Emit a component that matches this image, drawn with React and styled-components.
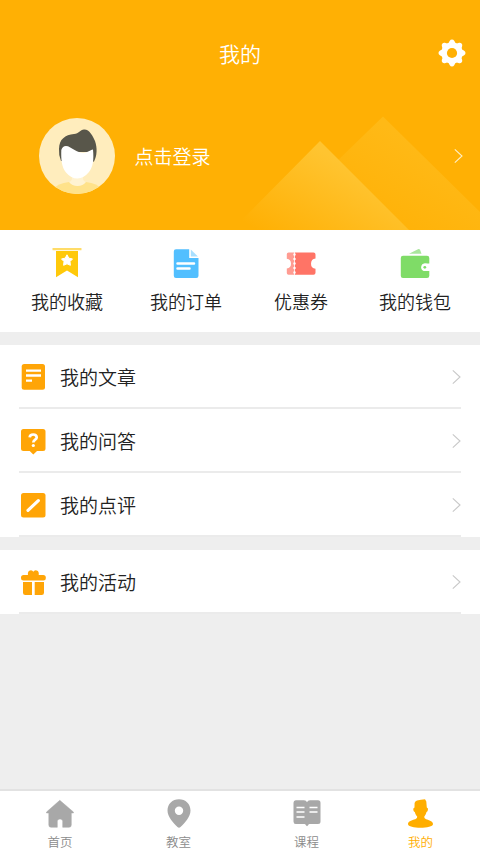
import React from 'react'
import styled, { createGlobalStyle } from 'styled-components'

const GlobalStyle = createGlobalStyle`
    * {
        box-sizing: border-box;
    }
    body {
        margin: 0;
        background-color: #fff;
        font-family: 'Noto Sans CJK SC', sans-serif;
        font-weight: 350;
    }
    svg {
        display: block;
        flex: none;
    }
`

const Page = styled.div`
    display: flex;
    flex-direction: column;
    width: 480px;
    height: 853px;
    background-color: #eee;
    overflow: hidden;
`

const Header = styled.header`
    position: relative;
    flex: none;
    height: 230px;
    background-color: #ffb004;
    color: #fff;
`

const Mountains = styled.svg`
    position: absolute;
    right: 0;
    bottom: 0;
`

const TitleBar = styled.div`
    display: grid;
    grid-template-columns: 1fr auto 1fr;
    align-items: center;
    height: 106px;
    padding: 0 14px;
`

const Title = styled.h1`
    grid-column: 2;
    margin: 0;
    padding-bottom: 1px;
    font-size: 21px;
    line-height: 30px;
    font-weight: 350;
`

const SettingsButton = styled.button`
    justify-self: end;
    padding: 0;
    border: none;
    background: none;
`

const Login = styled.div`
    position: relative;
    display: flex;
    align-items: center;
    height: 99px;
    padding: 0 17.5px 0 39px;
`

const LoginText = styled.span`
    flex: 1;
    margin-left: 19.5px;
    font-size: 19px;
    line-height: 28px;
`

const QuickLinks = styled.nav`
    flex: none;
    display: grid;
    grid-template-columns: 118px 120px 110px 118px;
    height: 102px;
    padding: 17px 6px 0 8px;
    background-color: #fff;
`

const QuickLink = styled.div`
    display: flex;
    flex-direction: column;
    align-items: center;
    gap: 8px;
    color: #222;
    font-size: 18px;
    line-height: 28px;
    white-space: nowrap;
`

const Section = styled.section`
    flex: none;
    margin-top: ${(props) => props.gap};
    background-color: #fff;
`

const Row = styled.div`
    display: flex;
    align-items: center;
    height: 64px;
    margin: 0 19px;
    padding-top: 2px;
    border-bottom: 2px solid #ebebeb;
`

const RowIcon = styled.span`
    width: 28px;
    margin-right: 13px;
`

const RowText = styled.span`
    flex: 1;
    color: #222;
    font-size: 19px;
    line-height: 28px;
`

const TabBar = styled.nav`
    flex: none;
    display: grid;
    grid-template-columns: 120px 117px 139px 89px;
    height: 64px;
    margin-top: auto;
    padding-top: 8px;
    border-top: 2px solid #e2e2e2;
    background-color: #fff;
`

const Tab = styled.div`
    display: flex;
    flex-direction: column;
    align-items: center;
    gap: 4px;
    color: ${(props) => (props.$active ? '#ffae00' : '#8c8c8c')};
    font-size: 12.5px;
    line-height: 18px;
`

const Arrow = ({ color = '#c8c8c8' }) => (
    <svg width='10' height='16' viewBox='0 0 10 16' fill='none'>
        <path d='M1.800 1.300 9 8 1.800 14.700' stroke={color} strokeWidth='1.1' />
    </svg>
)

const Gear = () => (
    <svg width='28' height='28' viewBox='-14 -14 28 28'>
        <g fill='#fff'>
            <circle r='10.4' />
            {[0, 45, 90, 135, 180, 225, 270, 315].map((angle) => (
                <path
                    key={angle}
                    transform={`rotate(${angle})`}
                    d='M-5.2-8.8Q-3.2-9.7-2.2-12.2Q-1.5-13.5 0-13.5T2.2-12.2Q3.2-9.7 5.2-8.8Z'
                />
            ))}
        </g>
        <circle r='5.1' fill='#ffb004' />
    </svg>
)

const Avatar = () => (
    <svg width='76' height='76' viewBox='0 0 76 76'>
        <clipPath id='avatar'>
            <circle cx='38' cy='38' r='38' />
        </clipPath>
        <g clipPath='url(#avatar)'>
            <rect width='76' height='76' fill='#ffedbd' />
            <path
                d='M13 72Q19 65 30 64H47Q58 65 64 72V76H13Z'
                fill='#ffe28a'
            />
            <path
                d='M33 57H44V60Q44 63 47 64Q44 68 38.500 68T30 64Q33 63 33 60Z'
                fill='#fff3d2'
            />
            <path
                d='M22 43Q19.500 37 20 31C20.300 21 26 17 35 16C40 15.500 41 12 45 11.500C50 11 54 18 56 23C58.500 30 58 38 55 43.500L52 44V34H23V43Z'
                fill='#58564a'
            />
            <path
                d='M22.300 32Q24 26.800 29 28.300C34 30.500 38 34.800 44.500 34.700C49 34.700 51 32 54 31.500C55 42 54 49 50 54Q44.500 60.500 38.500 60.500Q32 60.500 27 54.500C22.500 49 22 41 22.300 32Z'
                fill='#fff'
            />
        </g>
    </svg>
)

const FavoriteIcon = () => (
    <svg width='30' height='32' viewBox='0 0 30 32'>
        <rect x='.5' y='1' width='29' height='2.300' rx='.6' fill='#ffdc68' />
        <path d='M4 4H26V30.300L15 23.500 4 30.300Z' fill='#ffc90a' />
        <path
            d='M15 7.800 16.800 11.200 20.500 11.900 18 14.600 18.400 18.300 15 16.800 11.600 18.300 12 14.600 9.500 11.900 13.200 11.200Z'
            fill='#fff'
            stroke='#fff'
            strokeLinejoin='round'
        />
    </svg>
)

const OrderIcon = () => (
    <svg width='30' height='32' viewBox='0 0 30 32'>
        <path
            d='M5 2.200H18.200V11H27.500V28.800Q27.500 31 25.300 31H5Q2.800 31 2.800 28.800V4.400Q2.800 2.200 5 2.200Z'
            fill='#52bfff'
        />
        <path d='M19.800 2.500 27 9.600H19.800Z' fill='#a8dfff' />
        <path d='M6.500 16.500H23M6.500 21.600H18.500' stroke='#fff' strokeWidth='2.500' strokeLinecap='round' />
    </svg>
)

const CouponIcon = () => (
    <svg width='30' height='32' viewBox='0 0 30 32'>
        <path
            d='M2.600 5.500H8V27.800H2.600Q.8 27.800.8 26V21.500A4.900 4.900 0 0 0 .8 11.800V7.300Q.8 5.500 2.600 5.500Z'
            fill='#ff9c92'
        />
        <path
            d='M8.800 5.500H27.500Q29.500 5.500 29.500 7.500V11.500A5.200 5.200 0 0 0 29.500 21.800V25.800Q29.500 27.800 27.500 27.800H8.800Z'
            fill='#ff7466'
        />
        <path d='M8.500 7.500V28' stroke='#fff' strokeWidth='2.500' strokeLinecap='round' strokeDasharray='0 4.500' />
    </svg>
)

const WalletIcon = () => (
    <svg width='30' height='32' viewBox='0 0 30 32'>
        <path d='M9 6.800 18.500 2Q19.500 1.800 20 2.800L21.500 6.800Z' fill='#a9e69c' />
        <path
            d='M3 8.800H27Q29.300 8.800 29.300 11V16.500H25.500A3.700 3.700 0 0 0 25.500 24H29.300V28.700Q29.300 31 27 31H3Q.8 31 .8 28.700V11Q.8 8.800 3 8.800Z'
            fill='#7fdc67'
        />
        <circle cx='25' cy='20.300' r='3.800' fill='#fff' />
        <circle cx='24.800' cy='20.300' r='1.400' fill='#7fdc67' />
    </svg>
)

const ArticleIcon = () => (
    <svg width='28' height='28' viewBox='0 0 28 28'>
        <rect x='2.700' y='1' width='23.300' height='25.800' rx='2.500' fill='#ffa507' />
        <path d='M7 7.600H22M7 12.500H22M7 17.600H13' stroke='#fff' strokeWidth='2.400' />
    </svg>
)

const QuestionIcon = () => (
    <svg width='28' height='28' viewBox='0 0 28 28'>
        <path
            d='M4.500 2H24Q26.500 2 26.500 4.500V21.500Q26.500 24 24 24H18L14.300 27.500 10.700 24H4.500Q2 24 2 21.500V4.500Q2 2 4.500 2Z'
            fill='#ffa507'
        />
        <path
            d='M10.700 10.400Q10.900 7.500 14.200 7.500T17.700 10.400C17.700 12.600 14.300 12.600 14.300 15.500'
            fill='none'
            stroke='#fff'
            strokeWidth='2.700'
        />
        <circle cx='14.300' cy='18.500' r='1.600' fill='#fff' />
    </svg>
)

const ReviewIcon = () => (
    <svg width='28' height='28' viewBox='0 0 28 28'>
        <rect x='2' y='2' width='24.500' height='24.500' rx='2.500' fill='#ffa507' />
        <path d='M9 19.300 19.300 9.700' stroke='#fff' strokeWidth='3.200' strokeLinecap='round' />
    </svg>
)

const GiftIcon = () => (
    <svg width='28' height='28' viewBox='0 0 28 28'>
        <g fill='#ffa507'>
            <rect x='2' y='7' width='24.800' height='5.600' rx='2.500' />
            <path d='M9.500 8.500C8 5 9.500 2.200 12 2.200Q13.600 2.200 14.300 3.700Q15 2.200 16.700 2.200C19.300 2.200 20.700 5 19.300 8.500Z' />
            <path d='M4 14H13V27H6.300Q4 27 4 24.700Z' />
            <path d='M15.700 14H25V24.700Q25 27 22.700 27H15.700Z' />
        </g>
    </svg>
)

const HomeIcon = () => (
    <svg width='28' height='30' viewBox='0 0 28 30'>
        <path
            d='M13.800 1.300 27.400 13V14H25.300V26Q25.300 28.300 23 28.300H16.700V22.500Q16.700 20 14 20T11.300 22.500V28.300H5Q2.800 28.300 2.800 26V14H.5V13Z'
            fill='#a8a8a8'
            stroke='#a8a8a8'
            strokeWidth='.5'
            strokeLinejoin='round'
        />
    </svg>
)

const PinIcon = () => (
    <svg width='28' height='30' viewBox='0 0 28 30'>
        <path
            fillRule='evenodd'
            d='M14 .2C20.600.2 25.500 5 25.500 11.500C25.500 18 19.500 24 15.500 28Q14 29.400 12.500 28C8.500 24 2.500 18 2.500 11.500C2.500 5 7.400.2 14 .2ZM14 7.600A4.200 4.200 0 1 0 14 16A4.200 4.200 0 1 0 14 7.600Z'
            fill='#a8a8a8'
        />
    </svg>
)

const BookIcon = () => (
    <svg width='28' height='30' viewBox='0 0 28 30'>
        <path
            d='M2.700 1.200H11Q13.300 1.200 14 3.300Q14.700 1.200 17 1.200H25Q27.500 1.200 27.500 3.700V22.500Q27.500 25 25 25H16.500Q15.500 25 15.300 26L14 27.200 12.700 26Q12.500 25 11.500 25H2.700Q.5 25 .5 22.500V3.700Q.5 1.200 2.700 1.200Z'
            fill='#a8a8a8'
        />
        <path d='M3.500 8.500H11.500M3.500 13H11.500M3.500 18H11.500M16.500 8.500H24.500M16.500 13H24.500' stroke='#fff' strokeWidth='1.700' />
    </svg>
)

const MeIcon = () => (
    <svg width='28' height='30' viewBox='0 0 28 30'>
        <path
            d='M7.600 4Q8 2 10 1.500Q14 .8 18 .2L19.300 2.500 19.800 8.500Q21.600 9 20.900 11Q20.400 12.800 19.500 13C19 15.500 18 16.500 17.300 17.500Q16.800 19 19 20.200C22 21.200 26 22 26 25C26 30 1 30 1 25C1 22 5 21.200 8.300 20.200Q10.700 19 10.200 17.500C9.300 16.500 8.300 15.500 7.800 13Q6.800 12.800 6.300 11Q5.800 9 7.500 8.500Z'
            fill='#ffae00'
        />
    </svg>
)

const quickLinks = [
    { text: '我的收藏', Icon: FavoriteIcon },
    { text: '我的订单', Icon: OrderIcon },
    { text: '优惠券', Icon: CouponIcon },
    { text: '我的钱包', Icon: WalletIcon },
]

const rows = [
    { text: '我的文章', Icon: ArticleIcon },
    { text: '我的问答', Icon: QuestionIcon },
    { text: '我的点评', Icon: ReviewIcon },
]

const tabs = [
    { text: '首页', Icon: HomeIcon },
    { text: '教室', Icon: PinIcon },
    { text: '课程', Icon: BookIcon },
    { text: '我的', Icon: MeIcon, active: true },
]

const MenuRow = ({ text, Icon }) => (
    <Row>
        <RowIcon>
            <Icon />
        </RowIcon>
        <RowText>{text}</RowText>
        <Arrow />
    </Row>
)

const App = () => {
    return (
        <Page>
            <GlobalStyle />
            <Header>
                <Mountains width='240' height='115' viewBox='0 0 240 115'>
                    <defs>
                        <linearGradient id='front' x1='.1' y1='.95' x2='.75' y2='.4'>
                            <stop offset='0' stopColor='#ffb004' />
                            <stop offset='1' stopColor='#ffc430' />
                        </linearGradient>
                        <linearGradient id='back' x1='.2' y1='.8' x2='.75' y2='.3'>
                            <stop offset='0' stopColor='#ffb004' />
                            <stop offset='1' stopColor='#ffb916' />
                        </linearGradient>
                    </defs>
                    <path d='M143 1.500 240 97V115H26Z' fill='url(#back)' />
                    <path d='M80 26 169 115H-8Z' fill='url(#front)' />
                </Mountains>
                <TitleBar>
                    <Title>我的</Title>
                    <SettingsButton aria-label='设置'>
                        <Gear />
                    </SettingsButton>
                </TitleBar>
                <Login>
                    <Avatar />
                    <LoginText>点击登录</LoginText>
                    <Arrow color='#fff0c8' />
                </Login>
            </Header>
            <QuickLinks>
                {quickLinks.map(({ text, Icon }) => (
                    <QuickLink key={text}>
                        <Icon />
                        {text}
                    </QuickLink>
                ))}
            </QuickLinks>
            <Section gap='13px'>
                {rows.map((row) => (
                    <MenuRow key={row.text} {...row} />
                ))}
            </Section>
            <Section gap='12.5px'>
                <MenuRow text='我的活动' Icon={GiftIcon} />
            </Section>
            <TabBar>
                {tabs.map(({ text, Icon, active }) => (
                    <Tab key={text} $active={active}>
                        <Icon />
                        {text}
                    </Tab>
                ))}
            </TabBar>
        </Page>
    )
}

export default App
